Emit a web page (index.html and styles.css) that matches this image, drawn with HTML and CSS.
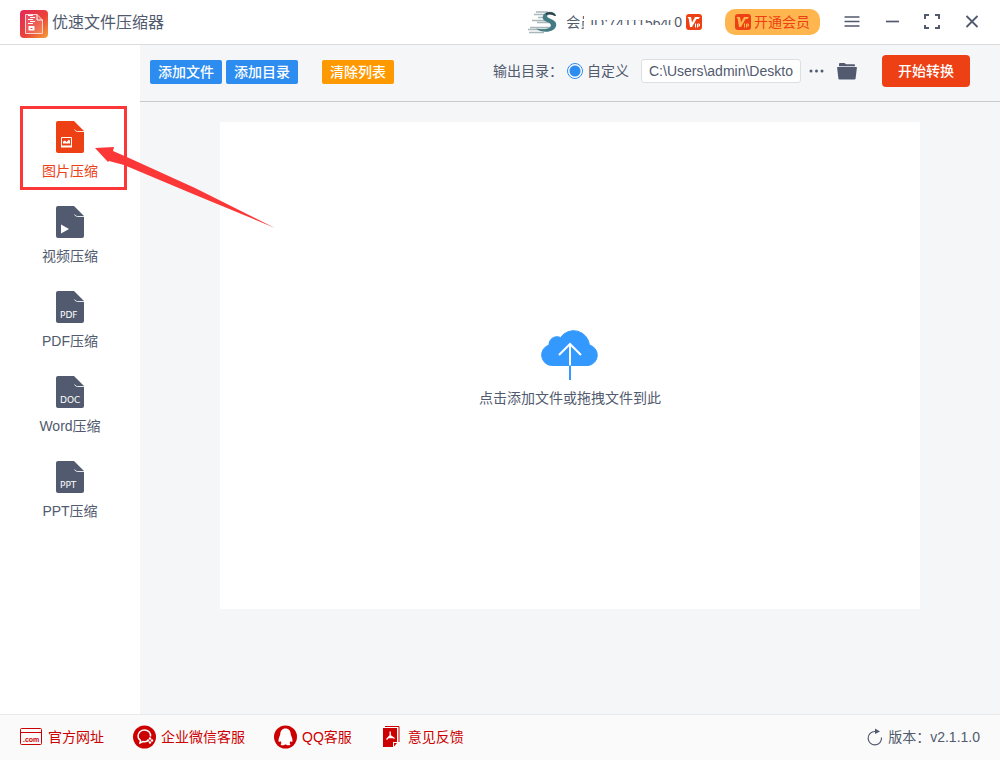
FILE: index.html
```html
<!DOCTYPE html>
<html lang="zh-CN">
<head>
<meta charset="utf-8">
<title>优速文件压缩器</title>
<link rel="stylesheet" href="styles.css">
</head>
<body>
<svg class="defs" width="0" height="0" aria-hidden="true">
  <defs>
    <symbol id="doc" viewBox="0 0 28 32">
      <path d="M2 0H18L28 10V30a2 2 0 0 1-2 2H2a2 2 0 0 1-2-2V2a2 2 0 0 1 2-2z" fill="currentColor"/>
      <path d="M18.500 8.500q1 2 3 2H28" fill="none" stroke="#fff" stroke-opacity=".85" stroke-width="1"/>
    </symbol>
    <symbol id="vip" viewBox="0 0 16 16">
      <rect width="16" height="16" rx="3" fill="#ed4014"/>
      <path d="M1.500 3H5L6 8.500L9 3H14L12.500 5H10.500L6 13H4L2.800 5z" fill="currentColor"/>
      <path d="M9.500 9.500V13.500M11.500 13.500V10H13.500V12H11.500" fill="none" stroke="currentColor"/>
    </symbol>
  </defs>
</svg>
<div class="app">
  <header class="header">
    <svg class="logo" width="28" height="28" viewBox="0 0 28 28" aria-hidden="true">
      <defs><linearGradient id="lg" x1="0" y1="0" x2="1" y2="1"><stop offset="0" stop-color="#e4265c"/><stop offset=".55" stop-color="#ea4339"/><stop offset="1" stop-color="#f7a236"/></linearGradient></defs>
      <rect width="28" height="28" rx="4" fill="url(#lg)"/>
      <path d="M5.500 4.500H17L22.500 10V23.500H5.500z" fill="#fff" fill-opacity=".15" stroke="#fbd3cf"/>
      <path d="M17 4.500V10H22.500" fill="none" stroke="#fff"/>
      <path d="M8 5.500h5M10 7.500h5M8 9.500h5M10 11.500h5M8 13.500h5" stroke="#fff" stroke-width="1.200"/>
      <path d="M8.500 16h6v4.500h-6z" fill="#fff"/><path d="M10.500 18.500h2" stroke="#ea4339"/>
    </svg>
    <h1 class="title">优速文件压缩器</h1>
    <div class="account">
      <svg width="30" height="24" viewBox="0 0 30 24" aria-hidden="true">
        <path d="M8 2H20M6 4.500H17M10 7.500H17M4 10.500H18M9 12.500H21M2 17.500H24M0 19.500H20M1 22.500H16" stroke="#a9b7ba" stroke-width="1.500"/>
        <path d="M28 6C27 2 22 1 18.500 2.500C13 5 14 10 18 11.500C23 13 24.500 16 21 18C17 20 11 19 8 18.500C12 22 20 23 25 20C30 16.500 29 11.500 24 9.500C19 7.500 18 6 20 5C23 3.500 25.500 6 28 6z" fill="#437b83"/>
        <path d="M18 3C23 1 27 3 28 6C25 6 23 3 18 5z" fill="#30414c"/>
      </svg>
      <span class="member"><span>会</span><span class="mask mask-half">员</span><span class="mask">ID:741115640</span><span>0</span></span>
      <svg class="vip" width="16" height="16" aria-label="VIP"><use href="#vip"/></svg>
    </div>
    <button class="join" type="button"><svg class="vip-gold" width="16" height="16" aria-hidden="true"><use href="#vip"/></svg><span>开通会员</span></button>
    <div class="window-controls">
      <button type="button" aria-label="菜单"><svg width="16" height="16" viewBox="0 0 16 16"><path d="M.5 3h15M.5 7.500h15M.5 12h15" stroke="currentColor" stroke-width="1.700"/></svg></button>
      <button type="button" aria-label="最小化"><svg width="16" height="16" viewBox="0 0 16 16"><path d="M2 7.500h13" stroke="currentColor" stroke-width="1.700"/></svg></button>
      <button type="button" aria-label="最大化"><svg width="16" height="16" viewBox="0 0 16 16"><path d="M1 5V1H5M11 1H15V5M15 11V14H11M5 14H1V11" fill="none" stroke="currentColor" stroke-width="2"/></svg></button>
      <button type="button" aria-label="关闭"><svg width="16" height="16" viewBox="0 0 16 16"><path d="M2.500 2L13.500 13M13.500 2L2.500 13" stroke="currentColor" stroke-width="1.800"/></svg></button>
    </div>
  </header>

  <div class="body">
    <nav class="sidebar">
      <button class="nav-item active" type="button">
        <svg width="28" height="32" viewBox="0 0 28 32" aria-hidden="true"><use href="#doc"/><path d="M5.500 16.500h10v9h-10z" fill="none" stroke="#fff"/><path d="M5 25.500h11" stroke="#fff" stroke-width="2"/><path d="M7 22.500V20.500L9 19.500L10.500 21L13 18.500L14 20V22.500z" fill="#fff"/></svg>
        <span>图片压缩</span>
      </button>
      <button class="nav-item" type="button">
        <svg width="28" height="32" viewBox="0 0 28 32" aria-hidden="true"><use href="#doc"/><path d="M5 18.500L13 23L5 27.500z" fill="#fff"/></svg>
        <span>视频压缩</span>
      </button>
      <button class="nav-item" type="button">
        <svg width="28" height="32" viewBox="0 0 28 32" aria-hidden="true"><use href="#doc"/><text x="4" y="27">PDF</text></svg>
        <span>PDF压缩</span>
      </button>
      <button class="nav-item" type="button">
        <svg width="28" height="32" viewBox="0 0 28 32" aria-hidden="true"><use href="#doc"/><text x="4" y="27">DOC</text></svg>
        <span>Word压缩</span>
      </button>
      <button class="nav-item" type="button">
        <svg width="28" height="32" viewBox="0 0 28 32" aria-hidden="true"><use href="#doc"/><text x="4" y="27">PPT</text></svg>
        <span>PPT压缩</span>
      </button>
      <div class="highlight"></div>
      <svg class="arrow" width="181" height="82" viewBox="0 0 181 82" aria-hidden="true"><path d="M0 1L19 0L18 4L34 11L100 41L180 81L98 47L29 18L14 14L13 15z" fill="#fb3737"/></svg>
    </nav>

    <main class="main">
      <div class="toolbar">
        <button class="btn blue" type="button">添加文件</button>
        <button class="btn blue" type="button">添加目录</button>
        <button class="btn orange" type="button">清除列表</button>
        <div class="output">
          <span>输出目录：</span>
          <label class="choice"><input type="radio" name="output" checked><span>自定义</span></label>
          <input class="path" type="text" value="C:\Users\admin\Deskto" aria-label="输出目录">
          <button class="icon-btn more" type="button" aria-label="更多"><svg width="16" height="4" viewBox="0 0 16 4"><g fill="currentColor"><circle cx="2" cy="2" r="1.500"/><circle cx="7.500" cy="2" r="1.500"/><circle cx="13" cy="2" r="1.500"/></g></svg></button>
          <button class="icon-btn" type="button" aria-label="打开目录"><svg width="20" height="18" viewBox="0 0 20 18"><path d="M2 4.300V2Q2 1 3 1H7.500L9 2.300H17Q18 2.300 18 3.300V4.300z" fill="currentColor"/><path d="M.7 5H19.300Q20 5 19.900 5.800L18.600 16.500Q18.500 17.500 17.500 17.500H2.500Q1.500 17.500 1.400 16.500L.1 5.800Q0 5 .7 5z" fill="currentColor"/></svg></button>
        </div>
        <button class="start" type="button">开始转换</button>
      </div>
      <div class="workspace">
        <button class="dropzone" type="button">
          <svg width="58" height="50" viewBox="0 0 58 50" aria-hidden="true">
            <path d="M10.500 35.500A10.500 10.500 0 0 1 8 15A8 8 0 0 1 19.500 7.500A16 16 0 0 1 48.500 15A10.500 10.500 0 0 1 47.500 35.500z" fill="#39f" stroke="#39f"/>
            <path d="M29 35V50" stroke="#39f" stroke-width="2"/>
            <path d="M29 35.500V14M18 25L29 14L40 25" fill="none" stroke="#fff" stroke-width="2"/>
          </svg>
          <span>点击添加文件或拖拽文件到此</span>
        </button>
      </div>
    </main>
  </div>

  <footer class="footer">
    <a href="#"><svg width="22" height="18" viewBox="0 0 22 18" aria-hidden="true"><rect x=".5" y=".5" width="21" height="16" rx="1" fill="none" stroke="currentColor"/><path d="M0 4.500h22" stroke="currentColor"/><text class="dotcom" x="3" y="14">.com</text></svg><span>官方网址</span></a>
    <a href="#"><svg width="23" height="24" viewBox="0 0 23 24" aria-hidden="true"><circle cx="11.500" cy="12" r="11.500" fill="currentColor"/><path d="M17.500 11.500C18 7.500 15 5 11.500 5S5 7.500 5 11Q5 14 7.500 15.500L7 18L10 16.500Q12.500 17 14.500 16" fill="none" stroke="#fff" stroke-width="1.500"/><g fill="#fff"><circle cx="17" cy="13.500" r="1.200"/><circle cx="19" cy="15.500" r="1.200"/><circle cx="17" cy="17.500" r="1.200"/><circle cx="15" cy="15.500" r="1.200"/></g></svg><span>企业微信客服</span></a>
    <a href="#"><svg width="23" height="24" viewBox="0 0 23 24" aria-hidden="true"><circle cx="11.500" cy="12" r="11.500" fill="currentColor"/><path d="M11.500 3.500C8 3.500 6.300 6 6.300 9C6 11 4.500 13 4.500 15.500C4.500 17.500 5.500 17 6.200 16L7.500 18C5.800 19.500 7 20.500 9 20.300C10.500 20.200 11 19.500 11.500 19.500S12.500 20.200 14 20.300C16 20.500 17.200 19.500 15.500 18L16.800 16C17.500 17 18.500 17.500 18.500 15.500C18.500 13 17 11 16.700 9C16.700 6 15 3.500 11.500 3.500z" fill="#fff"/></svg><span>QQ客服</span></a>
    <a class="feedback" href="#"><svg width="17" height="21" viewBox="0 0 17 21" aria-hidden="true"><path d="M2 .5H16V16" fill="none" stroke="currentColor"/><path d="M0 2H14V16H10V21H0zM11 17H14L11 20.500z" fill="currentColor"/><path d="M7.200 5.500V9.500L3.500 13.500M7.200 9.500L11.500 12.500M5.500 11.500H10" fill="none" stroke="#fff" stroke-width="1.300"/></svg><span>意见反馈</span></a>
    <div class="version"><svg width="16" height="18" viewBox="0 0 16 18" aria-hidden="true"><path d="M9 3.500H8A6.700 6.700 0 1 0 14.500 9.500" fill="none" stroke="currentColor" stroke-width="1.200"/><path d="M8 .5L13 3.500L8 6z" fill="currentColor"/></svg><span>版本：v2.1.1.0</span></div>
  </footer>
</div>
</body>
</html>
```
FILE: styles.css
```css
* { box-sizing: border-box; }
body {
  margin: 0;
  color: #515a6e;
  font: 400 14px/20px "Liberation Sans", "Noto Sans CJK SC", sans-serif;
}
button, input { font: inherit; color: inherit; }
button { border: 0; padding: 0; background: none; cursor: pointer; }
svg { display: block; flex: none; }
.defs { position: absolute; }
.app { display: flex; flex-direction: column; min-height: 100vh; background: #fff; }

.header {
  display: flex;
  align-items: center;
  height: 45px;
  padding: 0 8px 0 20px;
  border-bottom: 1px solid #dcdcdc;
  white-space: nowrap;
}
.logo { margin: 4px 4px 0 0; }
.title { margin: 0; padding-top: 2px; font-size: 16px; font-weight: 400; }
.account { display: flex; align-items: center; margin-left: auto; }
.member { display: flex; align-items: center; margin: 0 4px 0 8px; }
.mask { width: 84px; height: 5px; line-height: 7px; overflow: hidden; }
.mask-half { width: 4px; height: 14px; line-height: 14px; margin-right: 6px; }
.vip { color: #fff; }
.join {
  display: flex;
  align-items: center;
  gap: 3px;
  height: 26px;
  margin: 0 12px 0 23px;
  padding: 0 10px;
  border-radius: 10px;
  background: #ffb64f;
  color: #ed4014;
}
.vip-gold { color: #ffb64f; }
.window-controls { display: flex; }
.window-controls button { display: flex; justify-content: center; align-items: center; width: 40px; height: 40px; }

.body { display: flex; flex: 1; }
.sidebar { position: relative; flex: none; width: 140px; padding-top: 61px; }
.nav-item {
  display: flex;
  flex-direction: column;
  align-items: center;
  gap: 8px;
  width: 100%;
  height: 85px;
  padding-top: 15px;
}
.nav-item text { fill: #fff; font: 9px "DejaVu Sans", sans-serif; }
.active { color: #ed4014; }
.highlight { position: absolute; left: 20px; top: 61px; width: 107px; height: 84px; border: 3px solid #fb3737; pointer-events: none; }
.arrow { position: absolute; left: 95px; top: 102px; pointer-events: none; }

.main { display: flex; flex: 1; flex-direction: column; min-width: 0; background: #f5f6f8; }
.toolbar {
  display: flex;
  align-items: center;
  gap: 4px;
  height: 57px;
  padding: 0 30px 4px 10px;
  border-bottom: 1px solid #c8cacd;
  white-space: nowrap;
}
.btn { width: 72px; height: 24px; margin-top: 2px; border-radius: 2px; color: #fff; font-weight: 500; }
.blue { background: #2d8cf0; }
.orange { margin-left: 20px; background: #f90; }
.output { display: flex; align-items: center; margin-left: auto; }
.choice { display: flex; align-items: center; gap: 4px; margin-right: 12px; }
.choice input {
  appearance: none;
  width: 16px;
  height: 16px;
  margin: 0 0 0 4px;
  border: 1px solid #2d8cf0;
  border-radius: 50%;
  background: radial-gradient(circle, #2d8cf0 5px, #fff 6px);
}
.path { width: 160px; height: 24px; padding: 0 7px; border: 1px solid #dcdee2; border-radius: 3px; background: #fff; }
.icon-btn { display: flex; align-items: center; height: 24px; }
.more { margin: 0 12px 0 8px; }
.start { width: 88px; height: 32px; margin-left: 21px; border-radius: 4px; background: #ed4014; color: #fff; font-weight: 500; }

.workspace { display: flex; flex: 1; padding: 20px 80px 105px; }
.dropzone { display: flex; flex: 1; flex-direction: column; align-items: center; justify-content: center; gap: 8px; padding-top: 6px; background: #fff; }

.footer {
  display: flex;
  align-items: center;
  gap: 29px;
  height: 46px;
  padding: 0 20px 2px;
  border-top: 1px solid #e8eaec;
  background: #fafafa;
  white-space: nowrap;
}
.footer a { display: flex; align-items: center; gap: 6px; color: #c00; text-decoration: none; }
.footer a + a { gap: 5px; }
.footer a.feedback { gap: 8px; margin-left: 2px; }
.dotcom { fill: currentColor; font: bold 7px "Liberation Sans", sans-serif; }
.version { display: flex; align-items: center; gap: 5px; margin-left: auto; }
```
